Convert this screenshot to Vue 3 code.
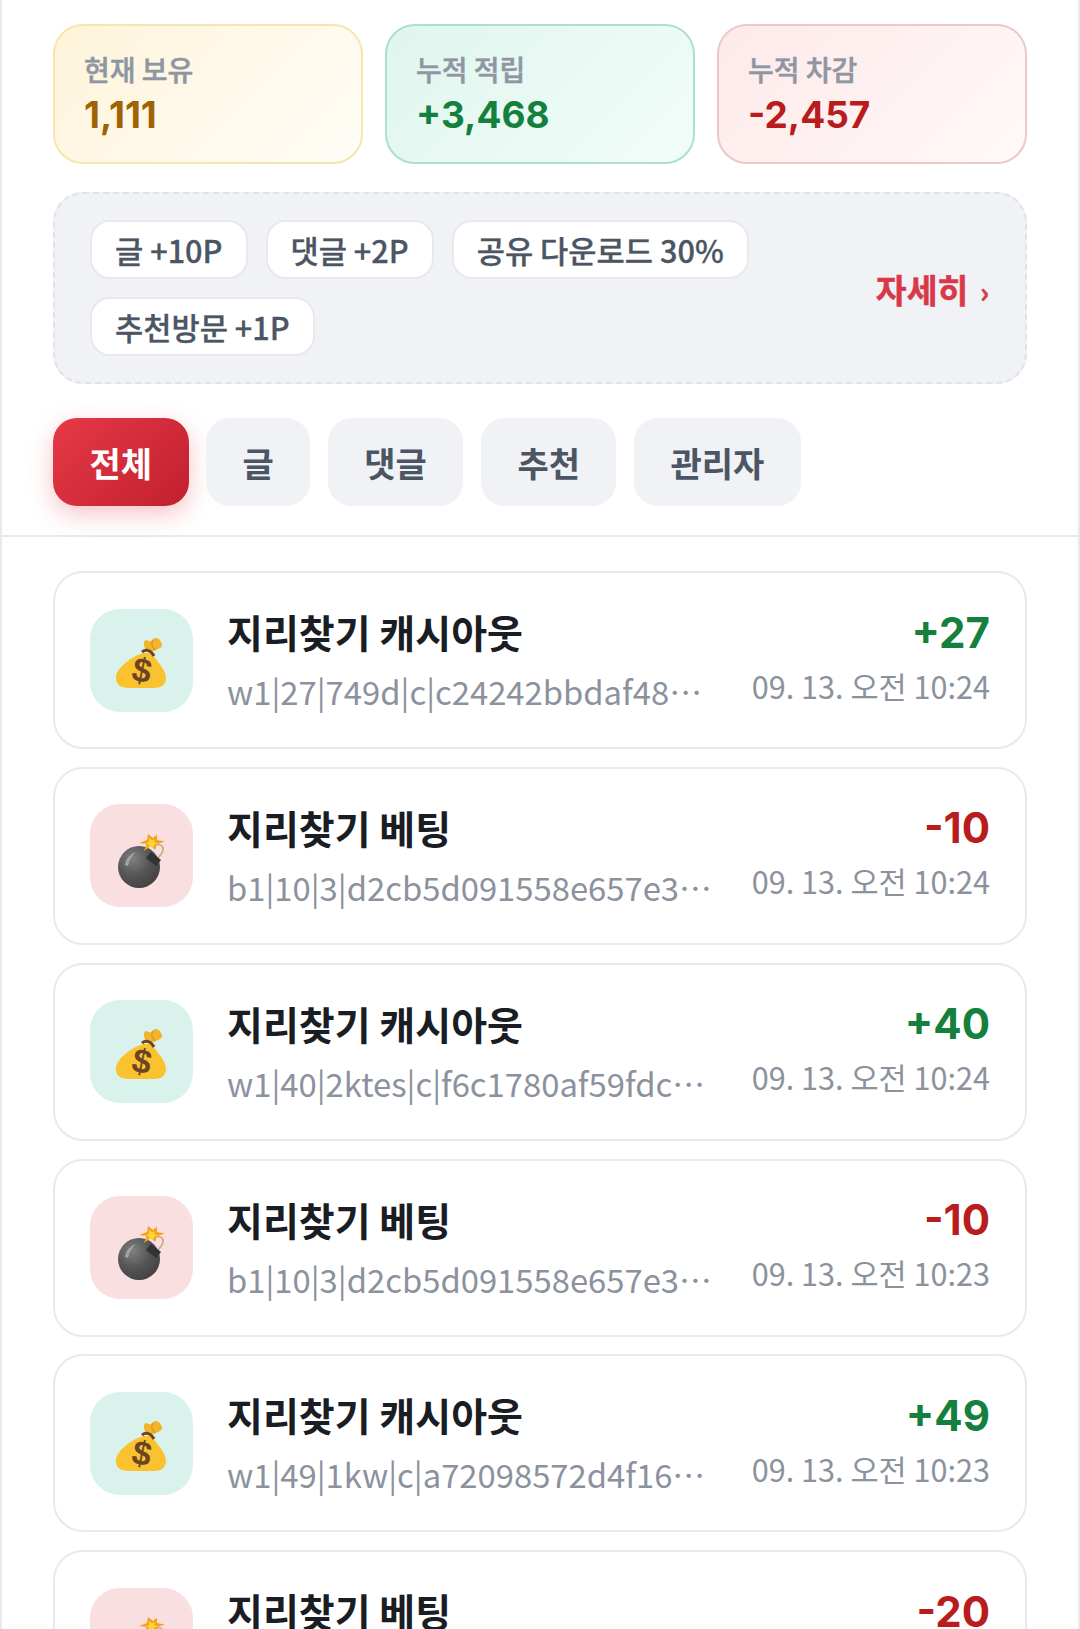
<template>
  <div class="page">
    <section class="head">
      <div class="stats">
        <div v-for="s in stats" :key="s.label" class="stat" :class="s.kind">
          <div class="stat-label">{{ s.label }}</div>
          <div class="stat-value">{{ s.value }}</div>
        </div>
      </div>

      <div class="info">
        <div class="chips">
          <span v-for="c in chips" :key="c" class="chip">{{ c }}</span>
        </div>
        <a class="more">자세히 <span class="arrow">›</span></a>
      </div>

      <div class="tabs">
        <button v-for="(t, i) in tabs" :key="t" class="tab" :class="{ active: i === 0 }">{{ t }}</button>
      </div>
    </section>

    <section class="list">
      <div v-for="(row, i) in rows" :key="i" class="row">
        <div class="icon" :class="row.win ? 'win' : 'lose'">
          <!-- money bag -->
          <svg v-if="row.win" class="bag" viewBox="0 0 52 54">
            <path d="M30 13C27 8 27 3 31 3c2 2 4 2 6-1 3-2 6-1 8 3 2 3 1 5-1 6-3 2-7 3-9 4z" fill="#f2b42a" />
            <path d="M37 3c-2 3-1 7 2 10" fill="none" stroke="#d9972a" stroke-width="1.2" />
            <path d="M28 16C18 18 0 30 0 41c0 8 6 10 14 10h24c8 0 12-4 12-10 0-9-10-17-14-25z" fill="#f9c22e" />
            <path d="M26 15c4-3 9-2 12 4" fill="none" stroke="#6b4423" stroke-width="3" />
            <text x="26" y="45" class="dollar" transform="rotate(12 26 33)">$</text>
          </svg>
          <!-- bomb -->
          <svg v-else class="bomb" viewBox="0 0 48 55">
            <defs>
              <radialGradient id="bombFill" cx="35%" cy="30%" r="75%">
                <stop offset="0" stop-color="#808080" />
                <stop offset="0.55" stop-color="#555555" />
                <stop offset="1" stop-color="#424242" />
              </radialGradient>
            </defs>
            <path d="M39 26c3-3 7-7 6-11-1-3-4-4-7-3" fill="none" stroke="#c8a878" stroke-width="1.6" />
            <circle cx="21" cy="34" r="21" fill="url(#bombFill)" />
            <path d="M7 32c1-6 5-11 11-13-4 4-7 8-8 14z" fill="#a5a5a5" />
            <path d="M33 19l10 8-5 6-10-8z" fill="#333333" />
            <path d="M30 1l5 4 4-3.500V7l8 1.500-8 2.500-2 6-4-4-7 5 2.500-7L21 10l8-3z" fill="#f4a11d" />
            <path d="M31 5l3 2.500 2.500-1.500v3.500l4 1-4 1-1 3-2.500-2-3 2 1-3.500-3.500-.5 3.500-1.500z" fill="#fdd835" />
          </svg>
        </div>
        <div class="body">
          <div class="title">{{ row.title }}</div>
          <div class="sub">{{ row.sub }}</div>
        </div>
        <div class="side">
          <div class="amount" :class="row.win ? 'plus' : 'minus'">{{ row.amount }}</div>
          <div class="date">{{ row.date }}</div>
        </div>
      </div>
    </section>
  </div>
</template>

<script setup>
const stats = [
  { label: '현재 보유', value: '1,111', kind: 'gold' },
  { label: '누적 적립', value: '+3,468', kind: 'green' },
  { label: '누적 차감', value: '-2,457', kind: 'red' },
]
const chips = ['글 +10P', '댓글 +2P', '공유 다운로드 30%', '추천방문 +1P']
const tabs = ['전체', '글', '댓글', '추천', '관리자']

const win = '지리찾기 캐시아웃'
const bet = '지리찾기 베팅'
const betSub = 'b1|10|3|d2cb5d091558e657e3a94f01c7'
const rows = [
  { win: true, title: win, sub: 'w1|27|749d|c|c24242bbdaf48e07a1b93c', amount: '+27', date: '09. 13. 오전 10:24' },
  { win: false, title: bet, sub: betSub, amount: '-10', date: '09. 13. 오전 10:24' },
  { win: true, title: win, sub: 'w1|40|2ktes|c|f6c1780af59fdc31e84a7', amount: '+40', date: '09. 13. 오전 10:24' },
  { win: false, title: bet, sub: betSub, amount: '-10', date: '09. 13. 오전 10:23' },
  { win: true, title: win, sub: 'w1|49|1kw|c|a72098572d4f16b3e90c7a', amount: '+49', date: '09. 13. 오전 10:23' },
  { win: false, title: bet, sub: betSub, amount: '-20', date: '09. 13. 오전 10:23' },
]
</script>

<style>
html,
body {
  margin: 0;
  background: #fff;
}
</style>

<style scoped>
.page {
  box-sizing: border-box;
  width: 1080px;
  height: 1629px;
  overflow: hidden;
  border-left: 2px solid #e8e9eb;
  border-right: 2px solid #e8e9eb;
  background: #fff;
  font-family: "Noto Sans CJK KR", "Noto Sans", sans-serif;
}

.head {
  padding: 24px 51px 29px;
  border-bottom: 2px solid #e8e9eb;
}

.stats {
  display: grid;
  grid-template-columns: repeat(3, 1fr);
  gap: 22px;
}

.stat {
  height: 140px;
  box-sizing: border-box;
  padding: 25px 29px 0;
  border: 2px solid;
  border-radius: 30px;
}

.stat.gold {
  border-color: #f6e6ad;
  background: linear-gradient(135deg, #fef4da, #fffdf7);
}

.stat.green {
  border-color: #acdfcd;
  background: linear-gradient(135deg, #dff6ed, #f2fdf9);
}

.stat.red {
  border-color: #edc8c8;
  background: linear-gradient(135deg, #fee9e9, #fff9f9);
}

.stat-label {
  font-size: 28px;
  line-height: 36px;
  font-weight: 500;
  color: #8f96a3;
  -webkit-text-stroke: 0.5px #8f96a3;
}

.stat-value {
  margin-top: 5px;
  font-family: "Inter", sans-serif;
  font-size: 37px;
  line-height: 46px;
  font-weight: 700;
}

.gold .stat-value {
  color: #a16207;
}

.green .stat-value {
  color: #15803d;
}

.red .stat-value {
  color: #b91c1c;
}

.info {
  display: flex;
  align-items: center;
  justify-content: space-between;
  box-sizing: border-box;
  height: 192px;
  margin-top: 28px;
  padding: 0 36px 0 35px;
  border: 2px dashed #dfe2e6;
  border-radius: 30px;
  background: #f0f2f5;
}

.chips {
  display: flex;
  flex-wrap: wrap;
  gap: 18px;
  width: 680px;
}

.chip {
  box-sizing: border-box;
  height: 59px;
  padding: 0 23px;
  border: 2px solid #e7e9ed;
  border-radius: 20px;
  background: #fff;
  font-size: 30.7px;
  line-height: 55px;
  font-weight: 500;
  color: #4b5563;
  -webkit-text-stroke: 0.3px #4b5563;
}

.more {
  font-size: 33.5px;
  font-weight: 700;
  color: #d9384a;
  -webkit-text-stroke: 0.5px #d9384a;
}

.arrow {
  margin-left: 4px;
  font-size: 28px;
}

.tabs {
  display: flex;
  gap: 17.5px;
  margin-top: 34px;
}

.tab {
  height: 88px;
  padding: 0 36.5px;
  border: 0;
  border-radius: 24px;
  background: #f0f2f5;
  font-family: inherit;
  font-size: 34px;
  font-weight: 700;
  color: #4b5563;
}

.tab.active {
  background: linear-gradient(135deg, #e63946, #c1202f);
  color: #fff;
  box-shadow: 0 8px 24px rgba(230, 57, 70, 0.3);
}

.list {
  display: flex;
  flex-direction: column;
  gap: 17.85px;
  padding: 34px 51px 0;
}

.row {
  display: flex;
  align-items: center;
  box-sizing: border-box;
  flex: none;
  height: 178px;
  padding: 0 35px;
  border: 2px solid #e8e9eb;
  border-radius: 30px;
  background: #fff;
}

.icon {
  display: flex;
  align-items: center;
  justify-content: center;
  flex: none;
  width: 103px;
  height: 103px;
  margin-right: 34px;
  border-radius: 30px;
}

.icon.win {
  background: #d9f3ec;
}

.icon.lose {
  background: #fadfe1;
}

.bag {
  width: 52px;
  height: 54px;
  margin-top: 7px;
}

.bomb {
  width: 48px;
  height: 55px;
  margin-top: 9px;
}

.dollar {
  font-family: "Liberation Sans", sans-serif;
  font-size: 34px;
  font-weight: 700;
  fill: #6b4423;
  text-anchor: middle;
}

.body {
  flex: 1;
  min-width: 0;
  padding-right: 36px;
}

.title {
  font-size: 39px;
  line-height: 48px;
  font-weight: 700;
  color: #1a1d23;
}

.sub {
  margin-top: 14px;
  overflow: hidden;
  white-space: nowrap;
  text-overflow: ellipsis;
  font-size: 32.8px;
  line-height: 44px;
  color: #8b929e;
}

.side {
  flex: none;
  padding-bottom: 5px;
  text-align: right;
}

.amount {
  font-family: "Inter", sans-serif;
  font-size: 42px;
  line-height: 48px;
  font-weight: 700;
}

.amount.plus {
  color: #15803d;
}

.amount.minus {
  color: #b91c1c;
}

.date {
  margin-top: 8px;
  font-size: 30.6px;
  line-height: 42px;
  color: #8b929e;
}
</style>
